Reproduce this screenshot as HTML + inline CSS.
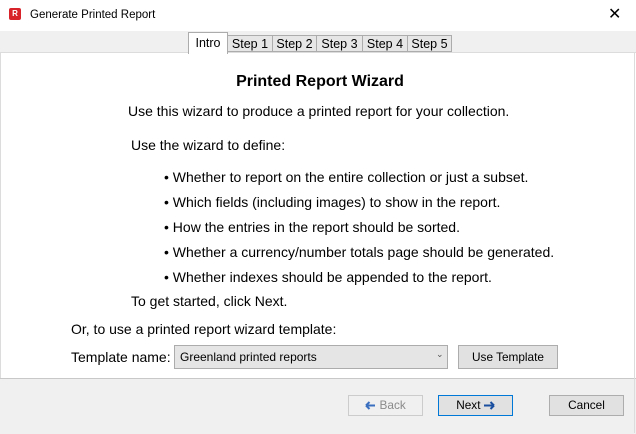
<!DOCTYPE html><html><head><style>
body{margin:0;width:636px;height:433px;background:#fff;font-family:"Liberation Sans",sans-serif;font-size:14px;color:#000;position:relative;overflow:hidden}
.a{position:absolute;white-space:nowrap}
.tab{position:absolute;top:35px;height:17px;border:1px solid #acacac;background:#e6e6e6;text-align:center;line-height:17px;font-size:12.5px;box-sizing:border-box}
.btn{position:absolute;box-sizing:border-box;border:1px solid #adadad;background:#e1e1e1;text-align:center;font-size:11.8px}
</style></head><body>
<div class="a" style="left:0;top:0;width:636px;height:31px;background:#fff"></div>
<div class="a" style="left:9px;top:8px;width:12px;height:12px;background:#d8232a;border-radius:2px;color:#fff;font-size:8px;font-weight:bold;text-align:center;line-height:12px">R</div>
<div class="a" style="left:30px;top:9px;font-size:11.5px">Generate Printed Report</div>
<div class="a" style="left:608px;top:4px;font-size:16px">✕</div>
<div class="a" style="left:0;top:31px;width:636px;height:22px;background:#f0f0f0"></div>
<div class="a" style="left:0;top:52px;width:636px;height:1px;background:#dcdcdc"></div>
<div class="tab" style="left:227px;width:46px">Step 1</div>
<div class="tab" style="left:272px;width:45px">Step 2</div>
<div class="tab" style="left:316px;width:47px">Step 3</div>
<div class="tab" style="left:362px;width:46px">Step 4</div>
<div class="tab" style="left:407px;width:45px">Step 5</div>
<div class="tab" style="left:188px;top:32px;height:22px;width:40px;background:#fff;border-bottom:none;line-height:21px">Intro</div>
<div class="a" style="left:0;top:53px;width:1px;height:325px;background:#dcdcdc"></div>
<div class="a" style="left:634px;top:53px;width:1px;height:325px;background:#dcdcdc"></div>
<div class="a" style="left:0;top:73px;width:640px;text-align:center;font-weight:bold;font-size:16px">Printed Report Wizard</div>
<div class="a" style="left:128px;top:103px">Use this wizard to produce a printed report for your collection.</div>
<div class="a" style="left:131px;top:137px">Use the wizard to define:</div>
<div class="a" style="left:164px;top:169px">• Whether to report on the entire collection or just a subset.</div>
<div class="a" style="left:164px;top:194px">• Which fields (including images) to show in the report.</div>
<div class="a" style="left:164px;top:219px">• How the entries in the report should be sorted.</div>
<div class="a" style="left:164px;top:244px">• Whether a currency/number totals page should be generated.</div>
<div class="a" style="left:164px;top:269px">• Whether indexes should be appended to the report.</div>
<div class="a" style="left:131px;top:293px">To get started, click Next.</div>
<div class="a" style="left:71px;top:321px">Or, to use a printed report wizard template:</div>
<div class="a" style="left:71px;top:349px">Template name:</div>
<div class="a" style="left:174px;top:345px;width:274px;height:24px;box-sizing:border-box;border:1px solid #acacac;background:#e5e5e5"></div>
<div class="a" style="left:180px;top:350px;font-size:12px">Greenland printed reports</div>
<div class="a" style="left:436px;top:349px;font-size:9px;color:#555">⌄</div>
<div class="btn" style="left:458px;top:345px;width:100px;height:24px;line-height:22px">Use Template</div>
<div class="a" style="left:0;top:378px;width:636px;height:55px;background:#f0f0f0;border-top:1px solid #c8c8c8"></div>
<div class="a" style="left:634px;top:378px;width:1px;height:55px;background:#dcdcdc"></div>
<div class="btn" style="left:348px;top:395px;width:75px;height:21px;line-height:19px;background:#f0f0f0;border-color:#cccccc;color:#8a8a8a"><svg width="11" height="9" viewBox="0 0 11 9" style="vertical-align:-1px"><path d="M1 4.5H10M1 4.5L4.5 1M1 4.5L4.5 8" stroke="#3a6fc0" stroke-width="2" fill="none"/></svg> Back</div>
<div class="btn" style="left:438px;top:395px;width:75px;height:21px;line-height:19px;border:1px solid #0078d7">Next <svg width="11" height="9" viewBox="0 0 11 9" style="vertical-align:-1px"><path d="M0 4.5H9M10 4.5L6.5 1M10 4.5L6.5 8" stroke="#1a4fa0" stroke-width="2" fill="none"/></svg></div>
<div class="btn" style="left:549px;top:395px;width:75px;height:21px;line-height:19px">Cancel</div>
</body></html>
